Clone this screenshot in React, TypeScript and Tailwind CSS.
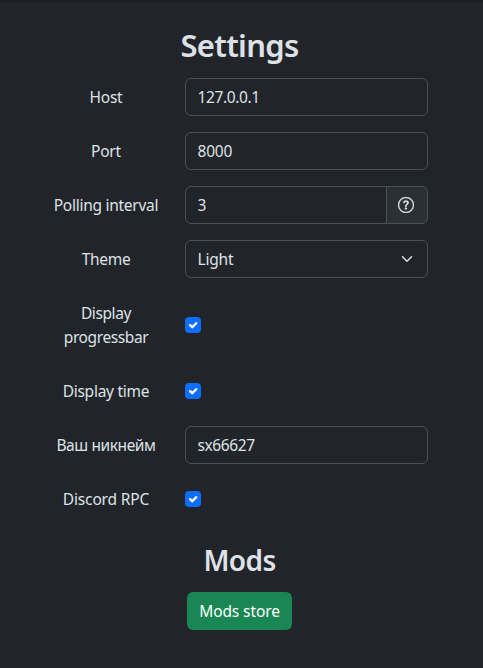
import type { ReactNode } from "react";
import { BsQuestionCircle } from "react-icons/bs";

function Row({ label, tracking, tall = false, children }: { label: string; tracking: string; tall?: boolean; children: ReactNode }) {
  return (
    <div className={`flex items-center ${tall ? "h-[62px]" : "h-[38px]"}`}>
      <label className={`w-[115px] pr-[3px] pl-0.5 text-center ${tracking}`}>{label}</label>
      <div className="ml-[21px] flex w-[243px]">{children}</div>
    </div>
  );
}

const field = "h-[38px] min-w-0 flex-1 border border-[#495057] bg-[#212529] pr-3 pl-[11.5px] text-[#dee2e6] outline-none";

function Check() {
  return (
    <span role="checkbox" aria-checked="true" className="block size-4 rounded-[4px] bg-[#0d6efd]">
      <svg viewBox="0 0 20 20" className="size-4" fill="none" stroke="#fff" strokeWidth="3" strokeLinecap="round" strokeLinejoin="round">
        <path d="m6.4 10.2 2.6 2.6 5-5" />
      </svg>
    </span>
  );
}

export default function App() {
  return (
    <main className="h-[668px] w-[483px] overflow-hidden bg-[#212529] bg-[linear-gradient(to_bottom,#1b1f22,#212529_4px)] pt-[26px] font-['Noto_Sans',sans-serif] text-[15.5px] leading-6 text-[#dee2e6]">
      <h1 className="h-[38px] pr-1 text-center text-[31px] leading-[38px] font-semibold tracking-[-0.7px]">Settings</h1>
      <form className="mt-[14px] ml-[49px] flex flex-col gap-4">
        <Row label="Host" tracking="tracking-[-0.25px]">
          <input className={`${field} rounded-md tracking-[-0.38px]`} defaultValue="127.0.0.1" />
        </Row>
        <Row label="Port" tracking="tracking-[-0.25px]">
          <input className={`${field} rounded-md tracking-[-0.2px]`} defaultValue="8000" />
        </Row>
        <Row label="Polling interval" tracking="tracking-[-0.27px]">
          <input className={`${field} rounded-l-md`} defaultValue="3" />
          <span className="-ml-px flex w-[42px] items-center justify-center rounded-r-md border border-[#495057] bg-[#2b3035] pr-0.5">
            <BsQuestionCircle className="size-4" stroke="currentColor" strokeWidth="0.4" />
          </span>
        </Row>
        <Row label="Theme" tracking="tracking-[-0.3px]">
          <button type="button" className={`${field} flex items-center justify-between rounded-md tracking-[-0.2px]`}>
            Light
            <svg viewBox="0 0 16 16" className="mr-0.5 size-3 overflow-visible" fill="none" stroke="#dee2e6" strokeWidth="2" strokeLinecap="round" strokeLinejoin="round">
              <path d="m2 5 6 6 6-6" />
            </svg>
          </button>
        </Row>
        <Row label="Display progressbar" tracking="tracking-[-0.4px]" tall><Check /></Row>
        <Row label="Display time" tracking="tracking-[-0.25px]"><Check /></Row>
        <Row label="Ваш никнейм" tracking="tracking-[-0.4px]">
          <input className={`${field} rounded-md tracking-[-0.4px]`} defaultValue="sx66627" />
        </Row>
        <Row label="Discord RPC" tracking="tracking-[-0.15px]"><Check /></Row>
      </form>
      <section className="mt-[25px] flex flex-col items-center pr-1">
        <h2 className="h-[34px] text-[28px] leading-[34px] font-semibold tracking-[-0.6px]">Mods</h2>
        <button className="mt-[15px] h-[38px] w-[105px] rounded-md bg-[#198754] tracking-[-0.1px] text-white">Mods store</button>
      </section>
    </main>
  );
}
